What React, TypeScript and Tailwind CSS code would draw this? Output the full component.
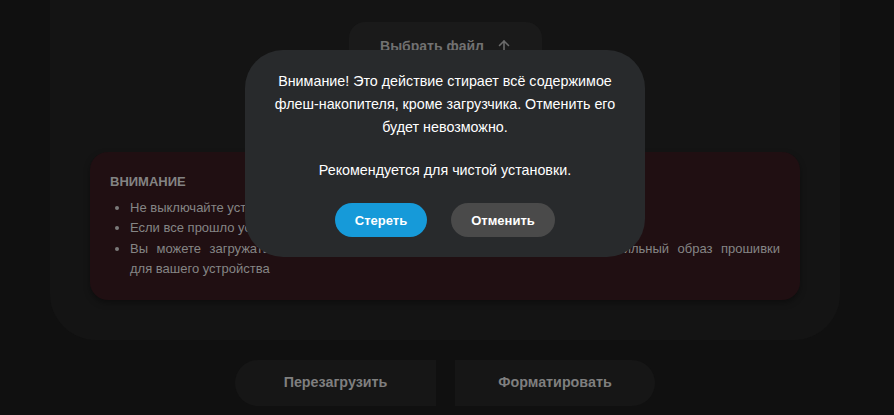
import React from "react";

function ArrowUpIcon() {
  return (
    <svg width="12" height="14" viewBox="0 0 12 14" fill="none" stroke="#6b6b6b" strokeWidth="1.6" strokeLinecap="round" strokeLinejoin="round">
      <path d="M6 13V2" />
      <path d="M1.5 6.5L6 2l4.5 4.5" />
    </svg>
  );
}

export default function App() {
  return (
    <div
      className="relative min-h-[415px] h-[415px] overflow-hidden bg-[#101010]"
      style={{ fontFamily: '"Liberation Sans", Arial, sans-serif' }}
    >
      <div className="ml-[50px] w-[790px] rounded-b-[46px] bg-[#141414] px-[40px] pt-[22px] pb-[40px]">
        <div className="flex justify-center">
          <div className="flex h-[48px] w-[193px] items-center justify-center gap-[14px] rounded-[16px] bg-[#1a1a1a] text-[14px] font-bold text-[#717171]">
            <span>Выбрать файл</span>
            <ArrowUpIcon />
          </div>
        </div>
        <div className="mt-[82px] rounded-[18px] bg-[#200f12] px-[20px] pt-[21px] pb-[21px] shadow-[0_3px_6px_rgba(0,0,0,0.35)]">
          <div className="text-[13px] font-bold leading-[18px] text-[#838383]">ВНИМАНИЕ</div>
          <ul className="mt-[7px] list-disc pl-[20px] text-[13px] leading-[20.3px] text-[#858585] marker:text-[#7a7a7a]">
            <li>Не выключайте устройство во время прошивки</li>
            <li>Если все прошло успешно, устройство перезагрузится автоматически</li>
            <li>
              <span className="block text-justify [text-align-last:justify]">
                Вы можете загружать только официальный, проверенный и заведомо правильный образ прошивки
              </span>
              <span className="block">для вашего устройства</span>
            </li>
          </ul>
        </div>
      </div>

      <div className="mt-[20px] flex justify-start pl-[235px] gap-[19px]">
        <div className="flex h-[46px] w-[201px] items-center justify-center rounded-l-full bg-[#161616] text-[14.3px] font-bold text-[#7f7f7f]">
          Перезагрузить
        </div>
        <div className="flex h-[46px] w-[200px] items-center justify-center rounded-r-full bg-[#161616] text-[14.3px] font-bold text-[#7f7f7f]">
          Форматировать
        </div>
      </div>

      <div className="absolute left-[245px] top-[50px] w-[400px] rounded-[38px] bg-[#282a2c] px-[24px] pt-[20px] pb-[20px] text-center text-[14.3px] leading-[23px] text-white">
        <p>
          Внимание! Это действие стирает всё содержимое флеш-накопителя, кроме загрузчика. Отменить его будет невозможно.
        </p>
        <p className="mt-[20px]">Рекомендуется для чистой установки.</p>
        <div className="mt-[21px] flex justify-center gap-[24px]">
          <button className="h-[34px] w-[92px] rounded-full bg-[#169ad9] text-[13px] font-bold text-white">
            Стереть
          </button>
          <button className="h-[34px] w-[104px] rounded-full bg-[#4a4a4a] text-[13px] font-bold text-white">
            Отменить
          </button>
        </div>
      </div>
    </div>
  );
}
